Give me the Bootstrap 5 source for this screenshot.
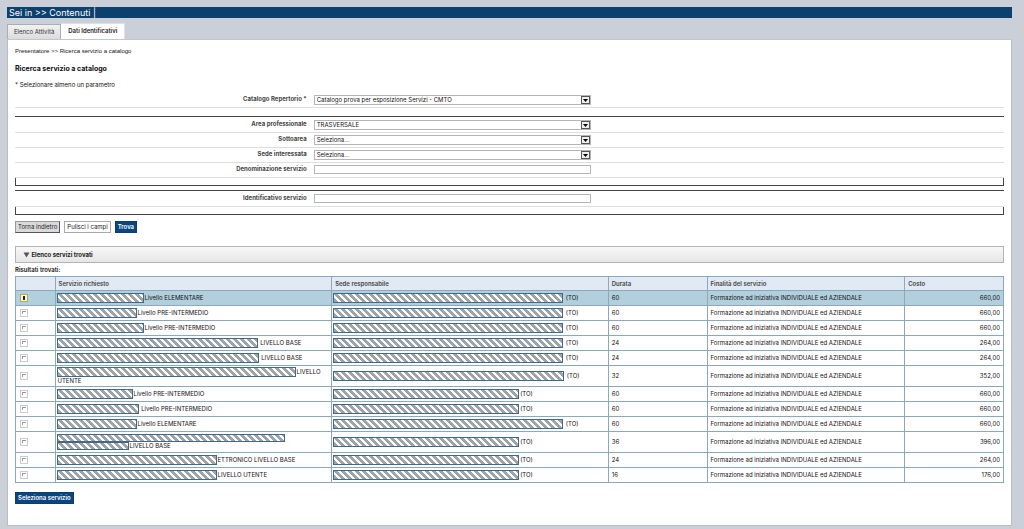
<!DOCTYPE html>
<html lang="it">
<head>
<meta charset="utf-8">
<meta name="viewport" content="width=device-width, initial-scale=1">
<title>Ricerca servizio a catalogo</title>
<link href="https://cdn.jsdelivr.net/npm/bootstrap@5.3.0/dist/css/bootstrap.min.css" rel="stylesheet">
<style>
  body { font-family: Inter, "Liberation Sans", Arial, sans-serif; font-size: 6px; line-height: 8px; color: #111; background: #cacfd8; }
  .page-frame { padding: 7px 12px 5px 7px; border-bottom: 1px solid #9ba0aa; }
  .title-bar { background: #0b406f; color: #fff; font-size: 9px; line-height: 11px; padding: 0 2px; margin-bottom: 5px; }
  .nav-tabs { border: 0; }
  .nav-tabs .nav-link { border: 1px solid #a9adb5; border-bottom: 0; border-radius: 0; margin: 1px 0 0; padding: 3px 6px; line-height: 8px; color: #333; background: linear-gradient(#f2f2f2, #dcdcde); }
  .nav-tabs .nav-link.active { margin: 0; padding: 3px 7px 4px; background: #fff; color: #222; font-weight: 600; border-left: 0; }
  .panel { background: #fff; padding: 7px 7px 21px; border: 1px solid #b9bdc5; border-top-color: #c3c6cc; }
  .crumbs { font-family: "Liberation Sans", Arial, sans-serif; }
  .heading { font-size: 7px; line-height: 10px; font-weight: 700; margin: 9px 0 7px; }
  .field { border-bottom: 1px solid #dedede; padding: 2px 0; min-height: 15px; }
  .field label { flex: 0 0 30%; padding-right: 5px; text-align: right; font-weight: 700; color: #444; line-height: 8px; }
  .field .form-control, .field .form-select { flex: 0 0 28%; width: 28%; min-height: 0; height: 10px; margin-left: 2px; padding: 0 2px; border: 1px solid #b5b5b5; border-radius: 0; font-size: 6px; line-height: 8px; color: #111; background-color: #fff; }
  .field .form-control { height: 9px; }
  .field .form-select { background-image: url("data:image/svg+xml,%3Csvg xmlns='http://www.w3.org/2000/svg' viewBox='0 0 9 8'%3E%3Crect x='.5' y='.5' width='8' height='7' fill='%23eee' stroke='%23555'/%3E%3Cpath d='M2 3h5L4.500 6z' fill='%23000'/%3E%3C/svg%3E"); background-position: right center; background-size: 9px 8px; }
  .group-line { border-top: 1px solid #444; padding-top: 1px; }
  .group-end { height: 8px; border: 1px solid #444; border-top: 0; }
  .actions { margin-top: 6px; }
  .btn { font-size: 6px; line-height: 8px; padding: 1px 2px; border-radius: 0; }
  .btn-back { background: #dadada; border-color: #999 #555 #555 #999; color: #222; }
  .btn-clear { background: #fff; border-color: #aaa; color: #222; }
  .btn-main { background: #0b4580; border-color: #0b3d70; color: #fff; font-weight: 600; }
  .btn-main:hover { background: #08365f; color: #fff; }
  .section-bar { display: block; width: 100%; text-align: left; border: 1px solid #b4b4b4; background: linear-gradient(#f8f8f8, #e6e6e6); padding: 4px 7px 3px; margin-top: 13px; font-weight: 700; line-height: 8px; color: #222; }
  .section-bar svg { width: 7px; height: 6px; }
  .results-label { margin: 3px 0 2px; font-weight: 600; }
  .results { table-layout: fixed; margin-bottom: 9px; color: #111; border-color: #8ca9ba; }
  .results th, .results td { height: 15px; padding: 0 2px; vertical-align: middle; border: 1px solid #8ca9ba; line-height: 8px; }
  .results th { background: #e0e9f4; color: #444; font-weight: 600; height: 14px; padding: 0 3px; }
  .results .tall td { height: 21px; }
  .results td:nth-child(4), .results td:nth-child(5), .results td:nth-child(6) { padding: 0 3px; }
  .results .picked td { background: #b2cfdd; }
  .hidden-text { display: inline-block; height: 10px; max-width: 100%; margin: 0 1px 0 -1px; vertical-align: middle; border: 1px solid #3e6a90; background: linear-gradient(45deg, #a0a4a6 27%, #fff 27% 50%, #a0a4a6 50% 77%, #fff 77%) 0 0 / 7px 7px; }
  .two-lines .hidden-text { height: 8px; vertical-align: bottom; }
  .results input { appearance: none; display: block; width: 8px; height: 8px; margin: 0 0 0 2px; border: 1px solid #ccc; background: linear-gradient(#999, #999) 1px 1px / 4px 1px no-repeat, linear-gradient(#999, #999) 1px 1px / 1px 3px no-repeat, #fff; }
  .results input:checked { border-color: #b9a94f; background: linear-gradient(#222, #222) center / 2px 4px no-repeat, #fdf9d8; }
</style>
</head>
<body>
<div class="page-frame">
  <header class="title-bar">Sei in &gt;&gt; Contenuti |</header>
  <nav class="nav nav-tabs align-items-stretch">
    <a class="nav-link" href="#attivita">Elenco Attività</a>
    <a class="nav-link active" href="#dati" aria-current="page">Dati Identificativi</a>
  </nav>
  <main class="panel">
    <div class="crumbs">Presentatore &gt;&gt; Ricerca servizio a catalogo</div>
    <h1 class="heading">Ricerca servizio a catalogo</h1>
    <div>* Selezionare almeno un parametro</div>
    <form class="mt-1">
      <div class="field d-flex"><label for="catalogo">Catalogo Repertorio *</label><select class="form-select" id="catalogo"><option>Catalogo prova per esposizione Servizi - CMTO</option></select></div>
      <div class="pt-2"></div>
      <div class="group-line">
        <div class="field d-flex"><label for="area">Area professionale</label><select class="form-select" id="area"><option>TRASVERSALE</option></select></div>
        <div class="field d-flex"><label for="sotto">Sottoarea</label><select class="form-select" id="sotto"><option>Seleziona...</option></select></div>
        <div class="field d-flex"><label for="sede">Sede interessata</label><select class="form-select" id="sede"><option>Seleziona...</option></select></div>
        <div class="field d-flex"><label for="denom">Denominazione servizio</label><input class="form-control" id="denom" type="text"></div>
        <div class="group-end"></div>
      </div>
      <div class="group-line mt-1">
        <div class="field d-flex"><label for="ident">Identificativo servizio</label><input class="form-control" id="ident" type="text"></div>
        <div class="group-end"></div>
      </div>
      <div class="actions d-flex gap-1">
        <button type="button" class="btn btn-back">Torna indietro</button>
        <button type="reset" class="btn btn-clear">Pulisci i campi</button>
        <button type="button" class="btn btn-main">Trova</button>
      </div>
    </form>
    <button type="button" class="section-bar"><svg viewBox="0 0 7 6" aria-hidden="true"><path d="M.5.5h6L3.500 5.500z" fill="#555"/></svg> Elenco servizi trovati</button>
    <div class="results-label">Risultati trovati:</div>
    <table class="results w-100">
      <colgroup><col style="width:4%"><col style="width:28%"><col style="width:28%"><col style="width:10%"><col style="width:20%"><col style="width:10%"></colgroup>
      <thead><tr><th aria-label="Selezione"></th><th>Servizio richiesto</th><th>Sede responsabile</th><th>Durata</th><th>Finalità del servizio</th><th>Costo</th></tr></thead>
      <tbody>
        <tr class="picked"><td><input type="radio" name="s" aria-label="Servizio 1" checked></td><td><span class="hidden-text" style="width:87px"></span>Livello ELEMENTARE</td><td><span class="hidden-text" style="width:230px"></span> (TO)</td><td>60</td><td>Formazione ad iniziativa INDIVIDUALE ed AZIENDALE</td><td class="text-end">660,00</td></tr>
        <tr><td><input type="radio" name="s" aria-label="Servizio 2"></td><td><span class="hidden-text" style="width:80px"></span>Livello PRE-INTERMEDIO</td><td><span class="hidden-text" style="width:230px"></span> (TO)</td><td>60</td><td>Formazione ad iniziativa INDIVIDUALE ed AZIENDALE</td><td class="text-end">660,00</td></tr>
        <tr><td><input type="radio" name="s" aria-label="Servizio 3"></td><td><span class="hidden-text" style="width:87px"></span>Livello PRE-INTERMEDIO</td><td><span class="hidden-text" style="width:230px"></span> (TO)</td><td>60</td><td>Formazione ad iniziativa INDIVIDUALE ed AZIENDALE</td><td class="text-end">660,00</td></tr>
        <tr><td><input type="radio" name="s" aria-label="Servizio 4"></td><td><span class="hidden-text" style="width:201px"></span> LIVELLO BASE</td><td><span class="hidden-text" style="width:230px"></span> (TO)</td><td>24</td><td>Formazione ad iniziativa INDIVIDUALE ed AZIENDALE</td><td class="text-end">264,00</td></tr>
        <tr><td><input type="radio" name="s" aria-label="Servizio 5"></td><td><span class="hidden-text" style="width:202px"></span> LIVELLO BASE</td><td><span class="hidden-text" style="width:230px"></span> (TO)</td><td>24</td><td>Formazione ad iniziativa INDIVIDUALE ed AZIENDALE</td><td class="text-end">264,00</td></tr>
        <tr class="tall"><td><input type="radio" name="s" aria-label="Servizio 6"></td><td><span class="hidden-text" style="width:239px"></span>LIVELLO UTENTE</td><td><span class="hidden-text" style="width:231px"></span> (TO)</td><td>32</td><td>Formazione ad iniziativa INDIVIDUALE ed AZIENDALE</td><td class="text-end">352,00</td></tr>
        <tr><td><input type="radio" name="s" aria-label="Servizio 7"></td><td><span class="hidden-text" style="width:76px"></span>Livello PRE-INTERMEDIO</td><td><span class="hidden-text" style="width:186px"></span>(TO)</td><td>60</td><td>Formazione ad iniziativa INDIVIDUALE ed AZIENDALE</td><td class="text-end">660,00</td></tr>
        <tr><td><input type="radio" name="s" aria-label="Servizio 8"></td><td><span class="hidden-text" style="width:82px"></span> Livello PRE-INTERMEDIO</td><td><span class="hidden-text" style="width:186px"></span>(TO)</td><td>60</td><td>Formazione ad iniziativa INDIVIDUALE ed AZIENDALE</td><td class="text-end">660,00</td></tr>
        <tr><td><input type="radio" name="s" aria-label="Servizio 9"></td><td><span class="hidden-text" style="width:80px"></span>Livello ELEMENTARE</td><td><span class="hidden-text" style="width:230px"></span> (TO)</td><td>60</td><td>Formazione ad iniziativa INDIVIDUALE ed AZIENDALE</td><td class="text-end">660,00</td></tr>
        <tr class="tall"><td><input type="radio" name="s" aria-label="Servizio 10"></td><td class="two-lines"><span class="hidden-text" style="width:228px"></span><br><span class="hidden-text" style="width:72px"></span>LIVELLO BASE</td><td><span class="hidden-text" style="width:186px"></span>(TO)</td><td>36</td><td>Formazione ad iniziativa INDIVIDUALE ed AZIENDALE</td><td class="text-end">396,00</td></tr>
        <tr><td><input type="radio" name="s" aria-label="Servizio 11"></td><td><span class="hidden-text" style="width:160px"></span>ETTRONICO LIVELLO BASE</td><td><span class="hidden-text" style="width:186px"></span>(TO)</td><td>24</td><td>Formazione ad iniziativa INDIVIDUALE ed AZIENDALE</td><td class="text-end">264,00</td></tr>
        <tr><td><input type="radio" name="s" aria-label="Servizio 12"></td><td><span class="hidden-text" style="width:160px"></span>LIVELLO UTENTE</td><td><span class="hidden-text" style="width:186px"></span>(TO)</td><td>16</td><td>Formazione ad iniziativa INDIVIDUALE ed AZIENDALE</td><td class="text-end">176,00</td></tr>
      </tbody>
    </table>
    <button type="button" class="btn btn-main">Seleziona servizio</button>
  </main>
</div>
<script src="https://cdn.jsdelivr.net/npm/bootstrap@5.3.0/dist/js/bootstrap.bundle.min.js"></script>
</body>
</html>
